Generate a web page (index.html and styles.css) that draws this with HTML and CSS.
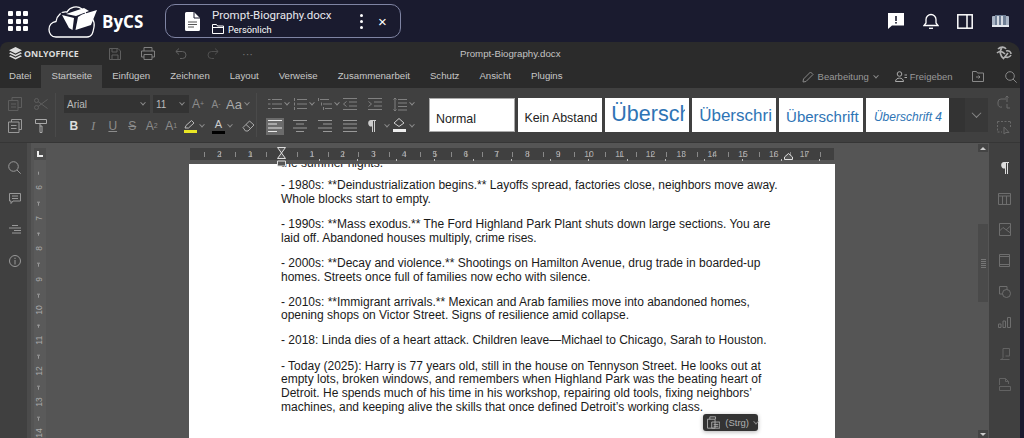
FILE: index.html
```html
<!DOCTYPE html>
<html lang="de">
<head>
    <meta charset="UTF-8">
    <title>Prompt-Biography.docx</title>
    <link rel="stylesheet" href="styles.css">
</head>
<body>
    <header class="topbar">
        <div class="apps">
            <i></i><i></i><i></i><i></i><i></i><i></i><i></i><i></i><i></i>
        </div>
        <svg class="cloud" width="50" height="33" viewBox="0 0 50 33" fill="none">
            <path d="M12 32H8C3 32 1 28 1 24.500C1 20 4 17 8 16.500C9 10 14 6 19 7C22 2 29 0 34 4C37 6 38 9 38 11C44 11 47 16 46 22C45 28 44 32 39 32H12Z" stroke="#fff" stroke-width="1.300"/>
            <path d="M12 7L29 13L25 27L21 25Z" fill="#1a1b2f"/>
            <path d="M14 10L26 13L24.500 25L21 23Z" fill="#fff"/>
            <path d="M27.500 25L30 12L34 9.500L49 5L43 20Z" fill="#fff"/>
            <path d="M18 9L36 3L41 6L28 11Z" fill="#fff"/>
        </svg>
        <span class="brand">ByCS</span>
        <div class="file-tab">
            <svg class="file-icon" width="15" height="19" viewBox="0 0 15 19">
                <path d="M0 1.500A1.500 1.500 0 0 1 1.500 0H9L15 6V17.500A1.500 1.500 0 0 1 13.500 19H1.500A1.500 1.500 0 0 1 0 17.500Z" fill="#fff"/>
                <path d="M3 10H12M3 12.500H12M3 15H9" stroke="#555" stroke-width="1"/>
                <path d="M9 0V6H15" fill="none" stroke="#1a1b2f" stroke-width="1"/>
            </svg>
            <div class="file-names">
                <div class="file-title">Prompt-Biography.docx</div>
                <div class="file-folder">
                    <svg width="12" height="10" viewBox="0 0 12 10" fill="none" stroke="#fff" stroke-width="1">
                        <path d="M.5 9.500V.5H4.500L5.500 2H11.500V9.500ZM.5 3.500H11.500"/>
                    </svg>
                    Persönlich
                </div>
            </div>
            <div class="file-dots"><i></i><i></i><i></i></div>
            <span class="file-close">×</span>
        </div>
        <div class="top-actions">
            <svg width="16" height="16" viewBox="0 0 16 16">
                <path d="M0 0H16V12.500H4L0 16Z" fill="#fff"/>
                <rect x="7.200" y="3" width="1.600" height="5" fill="#1a1b2f"/>
                <rect x="7.200" y="9" width="1.600" height="1.600" fill="#1a1b2f"/>
            </svg>
            <svg width="16" height="16" viewBox="0 0 16 16" fill="none" stroke="#fff" stroke-width="1.300">
                <path d="M1 12.500H15L13 10V6.500A5 5 0 0 0 3 6.500V10Z"/>
                <path d="M6 15.300H10"/>
            </svg>
            <svg width="16" height="15" viewBox="0 0 16 15" fill="none" stroke="#fff" stroke-width="1.500">
                <rect x=".8" y=".8" width="14.400" height="13.400"/>
                <path d="M10 1V14" />
            </svg>
            <svg width="17" height="13" viewBox="0 0 17 13">
                <rect x="0" y="1" width="17" height="11" rx="1" fill="#a9b4c4"/>
                <path d="M3 0H14V10H3Z" fill="#6f7f95"/>
                <path d="M5 1H7V10H5ZM9 1H11V10H9Z" fill="#d5dae2"/>
                <rect x="0" y="10" width="17" height="2" fill="#e6eaf0"/>
            </svg>
        </div>
    </header>

    <main class="editor">
        <div class="titlebar">
            <div class="oo-logo">
                <svg width="13" height="13" viewBox="0 0 13 13" fill="#ddd">
                    <path d="M6.500 0L13 3.200L6.500 6.400L0 3.200Z"/>
                    <path d="M1.500 5.300L6.500 7.700L11.500 5.300L13 6.200L6.500 9.400L0 6.200Z"/>
                    <path d="M1.500 8.300L6.500 10.700L11.500 8.300L13 9.200L6.500 12.400L0 9.200Z"/>
                </svg>
                ONLYOFFICE
            </div>
            <div class="quick">
                <svg width="12" height="12" viewBox="0 0 12 12" fill="none" stroke="#5e5e5e">
                    <path d="M.5 .5H9L11.500 3V11.500H.5ZM3 .5V4H8V.5M3 11.500V7H9V11.500"/>
                </svg>
                <svg width="14" height="13" viewBox="0 0 14 13" fill="none" stroke="#808080">
                    <path d="M3 4V.5H11V4M3 10H.5V4H13.500V10H11M3 7.500H11V12.500H3Z"/>
                </svg>
                <svg width="12" height="11" viewBox="0 0 12 11" fill="none" stroke="#606060">
                    <path d="M4 .5L.8 3.500L4 6.500M1 3.500H7.500A3.500 3.500 0 0 1 7.500 10.500H5"/>
                </svg>
                <svg width="12" height="11" viewBox="0 0 12 11" fill="none" stroke="#505050">
                    <path d="M8 .5L11.200 3.500L8 6.500M11 3.500H4.500A3.500 3.500 0 0 0 4.500 10.500H7"/>
                </svg>
                <span class="more">···</span>
            </div>
            <div class="doc-name">Prompt-Biography.docx</div>
            <svg class="title-avatar" width="16" height="15" viewBox="0 0 16 15" fill="none" stroke="#b0b0b0" stroke-width="1.600">
                <path d="M2 3C5 0 9 1 10 3M1 7C4 4 7 6 9 8M6 2C3 5 4 10 8 13M10 5C13 4 15 6 15 8M9 11C12 12 14 11 15 9M12 7L8 12"/>
            </svg>
        </div>

        <nav class="tabs">
            <span class="tab">Datei</span>
            <span class="tab tab-active">Startseite</span>
            <span class="tab">Einfügen</span>
            <span class="tab">Zeichnen</span>
            <span class="tab">Layout</span>
            <span class="tab">Verweise</span>
            <span class="tab">Zusammenarbeit</span>
            <span class="tab">Schutz</span>
            <span class="tab">Ansicht</span>
            <span class="tab">Plugins</span>
            <div class="tab-right">
                <svg class="edit-icon" width="12" height="12" viewBox="0 0 12 12" fill="none" stroke="#888">
                    <path d="M1 11L1.500 8L8.500 1L11 3.500L4 10.500Z"/>
                </svg>
                <span class="edit-label">Bearbeitung</span>
                <i class="chev"></i>
                <svg class="share-icon" width="12" height="11" viewBox="0 0 12 11" fill="none" stroke="#aaa">
                    <circle cx="4.500" cy="3" r="2.300"/>
                    <path d="M.5 10.500C.5 6 8.500 6 8.500 10.500ZM9.500 4H12M9.500 6.500H12" />
                </svg>
                <span class="share-label">Freigeben</span>
                <svg class="open-icon" width="12" height="11" viewBox="0 0 12 11" fill="none" stroke="#888">
                    <path d="M.5 10.500V.5H4.500L5.500 2H11.500V10.500ZM4 6H8M6.500 4.500L8 6L6.500 7.500"/>
                </svg>
                <svg class="find-icon" width="12" height="12" viewBox="0 0 12 12" fill="none" stroke="#888">
                    <circle cx="5" cy="5" r="4.300"/>
                    <path d="M8 8L11.700 11.700"/>
                </svg>
            </div>
        </nav>

        <section class="toolbar">
            <div class="tool-group clip-group">
                <div class="tool-row">
                    <span class="tb tb-clip">
                        <svg width="14" height="14" viewBox="0 0 14 14" fill="none" stroke="#5e5e5e"><path d="M4 3.500V.5H13.500V10.500H10M.5 3.500H10V13.500H.5ZM3 7H8M3 10H8"/></svg>
                    </span>
                    <span class="tb tb-clip">
                        <svg width="14" height="12" viewBox="0 0 14 12" fill="none" stroke="#5e5e5e"><circle cx="2.500" cy="2.500" r="2"/><circle cx="2.500" cy="9.500" r="2"/><path d="M4 3.500L13.500 10.500M4 8.500L13.500 1.500"/></svg>
                    </span>
                </div>
                <div class="tool-row">
                    <span class="tb tb-clip">
                        <svg width="14" height="14" viewBox="0 0 14 14" fill="none" stroke="#999"><path d="M3.500 3V.5H13.500V10.500H11M.5 3H11V13.500H.5ZM3 6.500H8.500M3 9.500H8.500"/></svg>
                    </span>
                    <span class="tb tb-clip">
                        <svg width="12" height="14" viewBox="0 0 12 14" fill="none" stroke="#aaa"><path d="M.5 .5H11.500V4.500H.5ZM5 4.500V7H7V13.500H5V7"/></svg>
                    </span>
                </div>
            </div>
            <i class="tool-sep"></i>
            <div class="tool-group font-group">
                <div class="tool-row">
                    <span class="combo combo-font">Arial<i class="chev"></i></span>
                    <span class="combo combo-size">11<i class="chev"></i></span>
                    <span class="tb glyph">A<sup>+</sup></span>
                    <span class="tb glyph glyph-small">A<sup>-</sup></span>
                    <span class="tb glyph glyph-case">Aa<i class="chev"></i></span>
                </div>
                <div class="tool-row">
                    <span class="tb fmt fmt-bold">B</span>
                    <span class="tb fmt fmt-italic">I</span>
                    <span class="tb fmt fmt-under">U</span>
                    <span class="tb fmt fmt-strike">S</span>
                    <span class="tb fmt">A<sup>2</sup></span>
                    <span class="tb fmt">A<sub>1</sub></span>
                    <span class="tb fmt-pen">
                        <svg width="13" height="9" viewBox="0 0 13 9" fill="none" stroke="#bbb"><path d="M1 8L2 5.500L7.500 .5L10 3L4.500 8Z"/></svg>
                        <b class="swatch swatch-yellow"></b>
                    </span>
                    <i class="chev"></i>
                    <span class="tb fmt-pen fmt-color">
                        A
                        <b class="swatch swatch-black"></b>
                    </span>
                    <i class="chev"></i>
                    <span class="tb fmt-erase">
                        <svg width="13" height="12" viewBox="0 0 13 12" fill="none" stroke="#aaa"><path d="M1 7.500L7.500 1L12 5L6 11H3.500ZM4 4.500L9 9"/></svg>
                    </span>
                </div>
            </div>
            <i class="tool-sep"></i>
            <div class="tool-group para-group">
                <div class="tool-row">
                    <span class="tb tb-para"><svg width="14" height="12" viewBox="0 0 14 12" fill="none" stroke="#808080"><path d="M4 1.500H14M4 6H14M4 10.500H14M0 1.500H2.500M0 6H2.500M0 10.500H2.500"/></svg><i class="chev"></i></span>
                    <span class="tb tb-para"><svg width="14" height="12" viewBox="0 0 14 12" fill="none" stroke="#808080"><path d="M4 1.500H14M4 6H14M4 10.500H14M1.500 0V3M1.500 4.500V7.500M1.500 9V12"/></svg><i class="chev"></i></span>
                    <span class="tb tb-para"><svg width="14" height="12" viewBox="0 0 14 12" fill="none" stroke="#808080"><path d="M2 1.500H11M5 6H14M7 10.500H14M.5 0V3M3.500 4.500V7.500M5.500 9V12"/></svg><i class="chev"></i></span>
                    <span class="tb tb-para"><svg width="14" height="12" viewBox="0 0 14 12" fill="none" stroke="#808080"><path d="M0 .5H14M6 4H14M6 8H14M0 11.500H14M3.500 3.500L.5 6L3.500 8.500"/></svg></span>
                    <span class="tb tb-para"><svg width="14" height="12" viewBox="0 0 14 12" fill="none" stroke="#808080"><path d="M0 .5H14M6 4H14M6 8H14M0 11.500H14M.5 3.500L3.500 6L.5 8.500"/></svg></span>
                    <span class="tb tb-para"><svg width="14" height="13" viewBox="0 0 14 13" fill="none" stroke="#808080"><path d="M5 1.500H14M5 5H14M5 8.500H14M5 12H14M2 0V13M.5 1.500L2 0L3.500 1.500M.5 11.500L2 13L3.500 11.500"/></svg><i class="chev"></i></span>
                </div>
                <div class="tool-row">
                    <span class="tb tb-para tb-on"><svg width="14" height="12" viewBox="0 0 14 12" fill="none" stroke="#e8e8e8"><path d="M0 .5H14M0 4H9M0 8H14M0 11.500H9"/></svg></span>
                    <span class="tb tb-para"><svg width="14" height="12" viewBox="0 0 14 12" fill="none" stroke="#999"><path d="M0 .5H14M3 4H11M0 8H14M3 11.500H11"/></svg></span>
                    <span class="tb tb-para"><svg width="14" height="12" viewBox="0 0 14 12" fill="none" stroke="#999"><path d="M0 .5H14M5 4H14M0 8H14M5 11.500H14"/></svg></span>
                    <span class="tb tb-para"><svg width="14" height="12" viewBox="0 0 14 12" fill="none" stroke="#999"><path d="M0 .5H14M0 4H14M0 8H14M0 11.500H14"/></svg></span>
                    <span class="tb tb-para"><svg width="8" height="12" viewBox="0 0 8 12" fill="#ccc"><path d="M3 0H8V1H7V12H6V1H5V12H4V6.500A3.200 3.200 0 0 1 3 0Z"/></svg><i class="chev chev-far"></i></span>
                    <span class="tb tb-para tb-fill">
                        <svg width="13" height="9" viewBox="0 0 13 9" fill="none" stroke="#ccc"><path d="M6 .5L11 5L6 8.500L1 5Z"/></svg>
                        <b class="swatch swatch-white"></b>
                        <i class="chev"></i>
                    </span>
                </div>
            </div>
            <div class="style-gallery">
                <span class="style-box style-selected">Normal</span>
                <span class="style-box">Kein Abstand</span>
                <span class="style-box style-h1">Überschrift 1</span>
                <span class="style-box style-h2">Überschrift 2</span>
                <span class="style-box style-h3">Überschrift 3</span>
                <span class="style-box style-h4">Überschrift 4</span>
                <span class="gallery-gap"></span>
                <span class="gallery-more"><i class="chev chev-big"></i></span>
            </div>
            <div class="tool-group hand-group">
                <svg width="14" height="14" viewBox="0 0 14 14" fill="none" stroke="#6a6a6a"><path d="M9 4H4A3 3 0 0 0 1 7V9A3 3 0 0 0 5 12M10 1V7M8.500 2.500L10 1L11.500 2.500M10 9V13H13"/></svg>
                <svg width="14" height="14" viewBox="0 0 14 14" fill="none" stroke="#6a6a6a"><path d="M.5 .5H13.500M.5 .5V10M13.500 .5V6M.5 11H5" stroke-dasharray="2 1.500"/><path d="M7 6V13L9 11.500H12Z"/></svg>
            </div>
        </section>

        <div class="workspace">
            <aside class="left-rail">
                <svg width="13" height="13" viewBox="0 0 13 13" fill="none" stroke="#999"><circle cx="5.500" cy="5.500" r="4.800"/><path d="M9 9L12.700 12.700"/></svg>
                <svg width="12" height="11" viewBox="0 0 12 11" fill="none" stroke="#999"><path d="M.5 .5H11.500V8H4L2 10.500V8H.5ZM3 3H9M3 5.500H9"/></svg>
                <svg width="12" height="10" viewBox="0 0 12 10" fill="none" stroke="#999"><path d="M3 .5H9M0 3H12M5 5.500H12M3 8H12"/></svg>
                <svg width="12" height="12" viewBox="0 0 12 12" fill="none" stroke="#999"><circle cx="6" cy="6" r="5.500"/><path d="M6 5V9.500M6 2.700V4"/></svg>
            </aside>

            <div class="v-ruler">
                <div class="ruler-corner"><i></i></div>
                <div class="v-marks">
                    <span>6</span><span>7</span><span>8</span><span>9</span><span>10</span>
                    <span>11</span><span>12</span><span>13</span><span>14</span>
                </div>
            </div>

            <div class="doc-area">
                <div class="h-ruler">
                    <span>2</span><span>1</span><span></span><span>1</span><span>2</span><span>3</span><span>4</span>
                    <span>5</span><span>6</span><span>7</span><span>8</span><span>9</span><span>10</span>
                    <span>11</span><span>12</span><span>13</span><span>14</span><span>15</span><span>16</span><span>17</span>
                    <svg class="indent-marker" width="9" height="22" viewBox="0 0 9 22" fill="#555" stroke="#ddd">
                        <path d="M.5 .5H8.500L4.500 6ZM.5 11.500L4.500 6L8.500 11.500ZM.5 14H8.500V19H.5Z"/>
                    </svg>
                    <svg class="right-marker" width="9" height="7" viewBox="0 0 9 7" fill="#555" stroke="#ddd">
                        <path d="M.5 6.500V4L4.500 .5L8.500 4V6.500Z"/>
                    </svg>
                </div>
                <article class="page">
                    <p class="cut">the summer nights.</p>
                    <p>- 1980s: **Deindustrialization begins.** Layoffs spread, factories close, neighbors move away. Whole blocks start to empty.</p>
                    <p>- 1990s: **Mass exodus.** The Ford Highland Park Plant shuts down large sections. You are laid off. Abandoned houses multiply, crime rises.</p>
                    <p>- 2000s: **Decay and violence.** Shootings on Hamilton Avenue, drug trade in boarded-up homes. Streets once full of families now echo with silence.</p>
                    <p>- 2010s: **Immigrant arrivals.** Mexican and Arab families move into abandoned homes, opening shops on Victor Street. Signs of resilience amid collapse.</p>
                    <p>- 2018: Linda dies of a heart attack. Children leave—Michael to Chicago, Sarah to Houston.</p>
                    <p>- Today (2025): Harry is 77 years old, still in the house on Tennyson Street. He looks out at empty lots, broken windows, and remembers when Highland Park was the beating heart of Detroit. He spends much of his time in his workshop, repairing old tools, fixing neighbors’ machines, and keeping alive the skills that once defined Detroit’s working class.</p>
                </article>
                <div class="paste-pop">
                    <svg width="14" height="13" viewBox="0 0 14 13" fill="none" stroke="#aaa"><path d="M3 3V.5H9V3M.5 3H8.500V12.500H.5ZM5 6H13.500V12.500H5ZM7 8.500H12M7 10.500H12"/></svg>
                    (Strg)
                    <i class="chev"></i>
                </div>
            </div>

            <div class="scrollbar">
                <span class="scroll-btn"><i class="arrow-up"></i></span>
                <span class="scroll-thumb"><i></i></span>
                <span class="scroll-btn"><i class="arrow-down"></i></span>
            </div>

            <aside class="right-rail">
                <svg width="8" height="12" viewBox="0 0 8 12" fill="#ddd"><path d="M3 0H8V1H7V12H6V1H5V12H4V6.500A3.200 3.200 0 0 1 3 0Z"/></svg>
                <svg width="13" height="12" viewBox="0 0 13 12" fill="none" stroke="#6e6e6e"><path d="M.5 .5H12.500V11.500H.5ZM.5 3H12.500M4.500 3V11.500M8.500 3V11.500"/></svg>
                <svg width="12" height="13" viewBox="0 0 12 13" fill="none" stroke="#6e6e6e"><path d="M.5 .5H11.500V12.500H.5ZM.5 8L4 4.500L11.500 10M7 7L11.500 3"/></svg>
                <svg width="11" height="13" viewBox="0 0 11 13" fill="none" stroke="#6e6e6e"><path d="M.5 .5H10.500V12.500H.5ZM.5 2.500H10.500M.5 10.500H10.500"/></svg>
                <svg width="12" height="12" viewBox="0 0 12 12" fill="none" stroke="#6e6e6e"><path d="M4 8H.5V.5H8V4"/><circle cx="7.500" cy="7.500" r="4"/></svg>
                <svg width="13" height="11" viewBox="0 0 13 11" fill="none" stroke="#6e6e6e"><path d="M.5 10.500V7H3V10.500ZM5 10.500V4H7.500V10.500ZM9.500 10.500V.5H12.500V10.500Z"/></svg>
                <svg width="10" height="12" viewBox="0 0 10 12" fill="none" stroke="#626262"><path d="M3 .5V9.500C3 10.500 2 11 .5 11.500H9.500M3 .5H9.500V8H5.500"/></svg>
                <svg width="12" height="13" viewBox="0 0 12 13" fill="none" stroke="#626262"><path d="M.5 7V.5H6.500L9.500 3.500V6M6.500 .5V3.500H9.500M.5 8.500H11.500V12.500H.5Z"/></svg>
            </aside>
        </div>
    </main>
</body>
</html>
```

FILE: styles.css
```css
* {
    box-sizing: border-box;
}

html, body {
    margin: 0;
    height: 438px;
    overflow: hidden;
}

body {
    display: flex;
    flex-direction: column;
    background: #1a1b2f;
    font-family: "Liberation Sans", Arial, sans-serif;
    color: #ccc;
}

/* top bar */
.topbar {
    height: 42px;
    flex: none;
    display: flex;
    align-items: center;
    padding-left: 8px;
    color: #fff;
}

.apps {
    width: 20px;
    display: grid;
    grid-template-columns: repeat(3, 5px);
    grid-auto-rows: 5px;
    gap: 2.500px;
}

.apps i {
    background: #fff;
    border-radius: 1px;
}

.cloud {
    margin-left: 20px;
}

.brand {
    margin-left: 4px;
    width: 63px;
    font-family: "Open Sans", sans-serif;
    font-size: 17px;
    font-weight: 700;
}

.file-tab {
    width: 236px;
    height: 34px;
    display: flex;
    align-items: center;
    padding-left: 19px;
    border: 1px solid #7f84a3;
    border-radius: 10px;
}

.file-names {
    width: 139px;
    flex: none;
    margin-left: 12px;
}

.file-title {
    font-family: Roboto, sans-serif;
    font-size: 11.500px;
    line-height: 16px;
    white-space: nowrap;
    color: #e8e8ee;
}

.file-folder {
    display: flex;
    align-items: center;
    gap: 4px;
    font-family: Roboto, sans-serif;
    font-size: 9.300px;
    line-height: 13px;
}

.file-dots {
    width: 4px;
    display: flex;
    flex-direction: column;
    gap: 3px;
    margin-left: 9px;
}

.file-dots i {
    width: 3px;
    height: 3px;
    border-radius: 50%;
    background: #fff;
}

.file-close {
    margin-left: 14px;
    font-size: 15px;
}

.top-actions {
    margin-left: auto;
    width: 121px;
    margin-right: 15px;
    display: flex;
    align-items: center;
    justify-content: space-between;
}

/* editor */
.editor {
    flex: 1;
    width: 1020px;
    min-height: 0;
    display: flex;
    flex-direction: column;
    background: #2b2b2b;
    border-radius: 8px 12px 0 0;
    overflow: hidden;
    font-size: 10.500px;
}

.titlebar {
    height: 23px;
    flex: none;
    display: flex;
    align-items: center;
    padding-left: 9px;
    position: relative;
}

.oo-logo {
    width: 100px;
    display: flex;
    align-items: center;
    gap: 2px;
    font-family: "Open Sans", sans-serif;
    font-size: 8.800px;
    font-weight: 700;
    color: #ddd;
}

.quick {
    display: flex;
    align-items: center;
    gap: 20px;
    color: #777;
}

.quick .more {
    font-size: 11px;
    margin-left: 3px;
}

.doc-name {
    position: absolute;
    left: 460px;
    font-size: 9.700px;
    color: #c4c4c4;
}

.title-avatar {
    margin-left: auto;
    margin-right: 8px;
}

.tabs {
    height: 23px;
    flex: none;
    display: flex;
    align-items: stretch;
    font-size: 9.650px;
    color: #c8c8c8;
}

.tab {
    padding: 0 10px;
    line-height: 22px;
}

.tab:first-child {
    padding-left: 9px;
}

.tab-active {
    background: #404040;
}

.tab-right {
    flex: 1;
    display: flex;
    align-items: center;
    font-size: 9.500px;
    color: #999;
}

.edit-icon {
    margin-left: 229px;
}

.edit-label {
    margin-left: 4px;
}

.share-icon {
    margin-left: 17px;
}

.share-label {
    margin-left: 3px;
}

.open-icon {
    margin-left: 19px;
}

.find-icon {
    margin-left: 21px;
}

.chev {
    display: inline-block;
    flex: none;
    width: 4px;
    height: 4px;
    border-right: 1px solid #8c8c8c;
    border-bottom: 1px solid #8c8c8c;
    transform: rotate(45deg) translate(-1px, -1px);
}

.tab-right .chev {
    margin-left: 5px;
}

/* ribbon */
.toolbar {
    height: 55px;
    flex: none;
    display: flex;
    align-items: center;
    background: #404040;
    border-bottom: 1px solid #363636;
}

.tool-group {
    display: flex;
    flex-direction: column;
    gap: 5px;
}

.tool-row {
    height: 17px;
    display: flex;
    align-items: center;
}

.tb {
    height: 17px;
    flex: none;
    display: flex;
    align-items: center;
    justify-content: center;
}

.tool-sep {
    width: 1px;
    height: 44px;
    flex: none;
    background: #4a4a4a;
}

.clip-group {
    width: 55px;
    padding-left: 2px;
}

.tb-clip {
    width: 26px;
}

.font-group {
    width: 200px;
    padding-left: 8px;
}

.combo {
    height: 18px;
    display: flex;
    align-items: center;
    justify-content: space-between;
    padding: 0 5px 0 3px;
    background: #333;
    color: #bbb;
    font-size: 10px;
}

.combo-font {
    width: 86px;
}

.combo-size {
    width: 36px;
    margin-left: 3px;
}

.glyph {
    width: 18px;
    font-size: 12px;
    color: #8c8c8c;
}

.glyph sup, .fmt sup {
    font-size: 7px;
    line-height: 0;
    vertical-align: 5px;
}

.glyph-small {
    font-size: 10px;
}

.glyph-case {
    width: 26px;
    font-size: 13px;
    color: #aaa;
    justify-content: flex-start;
    gap: 3px;
    padding-left: 1px;
}

.fmt {
    width: 19.500px;
    font-size: 12px;
    color: #8c8c8c;
}

.fmt sub {
    font-size: 7px;
    line-height: 0;
    vertical-align: -2px;
}

.fmt-bold {
    font-weight: 700;
    color: #ddd;
}

.fmt-italic {
    font-style: italic;
    font-family: "Liberation Serif", serif;
    font-size: 13px;
}

.fmt-under {
    text-decoration: underline;
}

.fmt-strike {
    text-decoration: line-through;
}

.fmt-pen {
    width: 15px;
    margin-left: 2px;
    margin-right: 2px;
    display: flex;
    flex-direction: column;
    align-items: center;
    justify-content: flex-start;
    height: 17px;
    color: #ccc;
    font-size: 11px;
    line-height: 12px;
}

.fmt-color {
    margin-left: 7px;
}

.swatch {
    display: block;
    width: 13px;
    height: 3px;
    margin-top: 1px;
}

.fmt-pen svg {
    margin-top: 2px;
}

.swatch-yellow {
    background: #e9e625;
}

.swatch-black {
    background: #000;
}

.swatch-white {
    background: #eee;
}

.fmt-erase {
    width: 16px;
    margin-left: 8px;
}

.para-group {
    width: 168px;
    padding-left: 5px;
    margin-left: 4px;
}

.tb-para {
    width: 25px;
    justify-content: flex-start;
    gap: 3px;
    padding-left: 2px;
}

.tb-on {
    width: 18px;
    margin-right: 7px;
    background: #6b6b6b;
}

.chev-far {
    margin-left: 6px;
}

.tb-fill {
    position: relative;
    flex-direction: column;
    align-items: flex-start;
    gap: 1px;
}

.tb-fill .chev {
    position: absolute;
    left: 19px;
    top: 6px;
}

.style-gallery {
    display: flex;
    height: 34px;
    margin-top: -1px;
    gap: 3.400px;
}

.style-box {
    width: 83.500px;
    height: 34px;
    flex: none;
    background: #fff;
    color: #222;
    font-size: 12.400px;
    line-height: 41px;
    padding-left: 6px;
    white-space: nowrap;
    overflow: hidden;
}

.style-selected {
    width: 86px;
    border: 1px solid #aaa;
}

.style-h1 {
    font-size: 21.500px;
    line-height: 33px;
    color: #2e74b5;
    padding-left: 6px;
    border-right: 4px solid #fff;
}

.style-h2 {
    font-size: 17px;
    line-height: 35px;
    color: #2e74b5;
    padding-left: 7px;
    border-right: 4px solid #fff;
}

.style-h3 {
    font-size: 15px;
    line-height: 37px;
    color: #2e74b5;
    padding-left: 7px;
}

.style-h4 {
    font-size: 12px;
    line-height: 39px;
    font-style: italic;
    color: #2e74b5;
    padding-left: 8px;
}

.gallery-gap {
    width: 16px;
    margin-left: -3.400px;
    background: #333;
}

.gallery-more {
    width: 23px;
    margin-left: -3.400px;
    display: flex;
    align-items: center;
    justify-content: center;
    background: #383838;
}

.chev-big {
    width: 7px;
    height: 7px;
    border-color: #888;
}

.hand-group {
    margin-left: 9px;
    gap: 12px;
}

/* workspace */
.workspace {
    flex: 1;
    min-height: 0;
    display: flex;
    background: #555;
}

.left-rail, .right-rail {
    width: 31px;
    flex: none;
    display: grid;
    grid-auto-rows: 31px;
    place-items: center;
    align-content: start;
    padding-top: 9px;
}

.left-rail {
    padding-right: 2px;
    background: linear-gradient(90deg, #404040 27px, #4b4b4b 27px);
}

.right-rail {
    background: #404040;
}

.v-ruler {
    width: 12px;
    flex: none;
    margin: 5px 0 0 3px;
    background: #5a5a5a;
}

.ruler-corner {
    height: 12px;
    background: #4c4c4c;
    padding: 3px;
}

.ruler-corner i {
    display: block;
    width: 6px;
    height: 6px;
    border-left: 2px solid #eee;
    border-bottom: 2px solid #eee;
}

.v-marks {
    padding-top: 12px;
}

.v-marks span {
    display: flex;
    align-items: center;
    justify-content: center;
    height: 30.700px;
    font-size: 8.500px;
    color: #aaa;
    writing-mode: vertical-rl;
    transform: rotate(180deg);
    background: linear-gradient(#999, #999) center 0 / 3px 1px no-repeat,
                linear-gradient(#999, #999) center 100% / 1px 3px no-repeat;
}

.doc-area {
    position: relative;
    flex: 1;
    min-width: 0;
    padding: 5px 0 0 143px;
}

.h-ruler {
    position: relative;
    width: 644px;
    height: 12px;
    margin-left: 1px;
    padding-left: 14px;
    display: flex;
    font-size: 8.500px;
    color: #b0b0b0;
    background-color: #404040;
    background-image: repeating-linear-gradient(90deg, transparent 0, transparent 14.400px, #888 14.400px, #888 15.400px);
    background-size: 100% 5px;
    background-repeat: no-repeat;
    background-position: 0 center;
}

.h-ruler::after {
    content: "";
    position: absolute;
    left: 129px;
    right: 0;
    bottom: -1px;
    height: 2px;
    background: repeating-linear-gradient(90deg, #bbb 0, #bbb 1px, transparent 1px, transparent 38.500px);
}

.h-ruler span {
    width: 30.800px;
    flex: none;
    text-align: center;
    line-height: 12px;
}

.indent-marker {
    position: absolute;
    left: 87px;
    top: -1px;
}

.right-marker {
    position: absolute;
    left: 594px;
    top: 5px;
}

.page {
    width: 646px;
    height: 300px;
    margin-top: 4px;
    padding: 0 54px 0 92px;
    overflow: hidden;
    background: #fff;
    color: #1a1a1a;
    font-size: 12px;
    line-height: 13.700px;
}

.page p {
    margin: 0 0 11.400px;
}

.page .cut {
    margin: -7px 0 8.600px;
}

.paste-pop {
    position: absolute;
    left: 657px;
    top: 271px;
    width: 55px;
    height: 17px;
    display: flex;
    align-items: center;
    gap: 5px;
    padding-left: 4px;
    background: #333;
    border-radius: 3px;
    color: #b0b0b0;
    font-size: 9.500px;
    box-shadow: 0 1px 4px rgba(0,0,0,0.3);
}

.scrollbar {
    width: 10px;
    flex: none;
    margin-right: 1px;
    display: flex;
    flex-direction: column;
    padding-top: 1px;
}

.scroll-btn {
    height: 8px;
    flex: none;
    display: flex;
    align-items: center;
    justify-content: center;
    background: #444;
}

.scroll-thumb {
    height: 78px;
    margin: 72px 0 auto;
    display: flex;
    align-items: center;
    justify-content: center;
    background: #4a4a4a;
}

.scroll-thumb i {
    width: 5px;
    height: 9px;
    background: repeating-linear-gradient(180deg, #777 0, #777 1px, transparent 1px, transparent 2px);
}

.arrow-up {
    border: 3px solid transparent;
    border-top: 0;
    border-bottom: 3px solid #ccc;
}

.arrow-down {
    border: 3px solid transparent;
    border-bottom: 0;
    border-top: 3px solid #ccc;
}
```
